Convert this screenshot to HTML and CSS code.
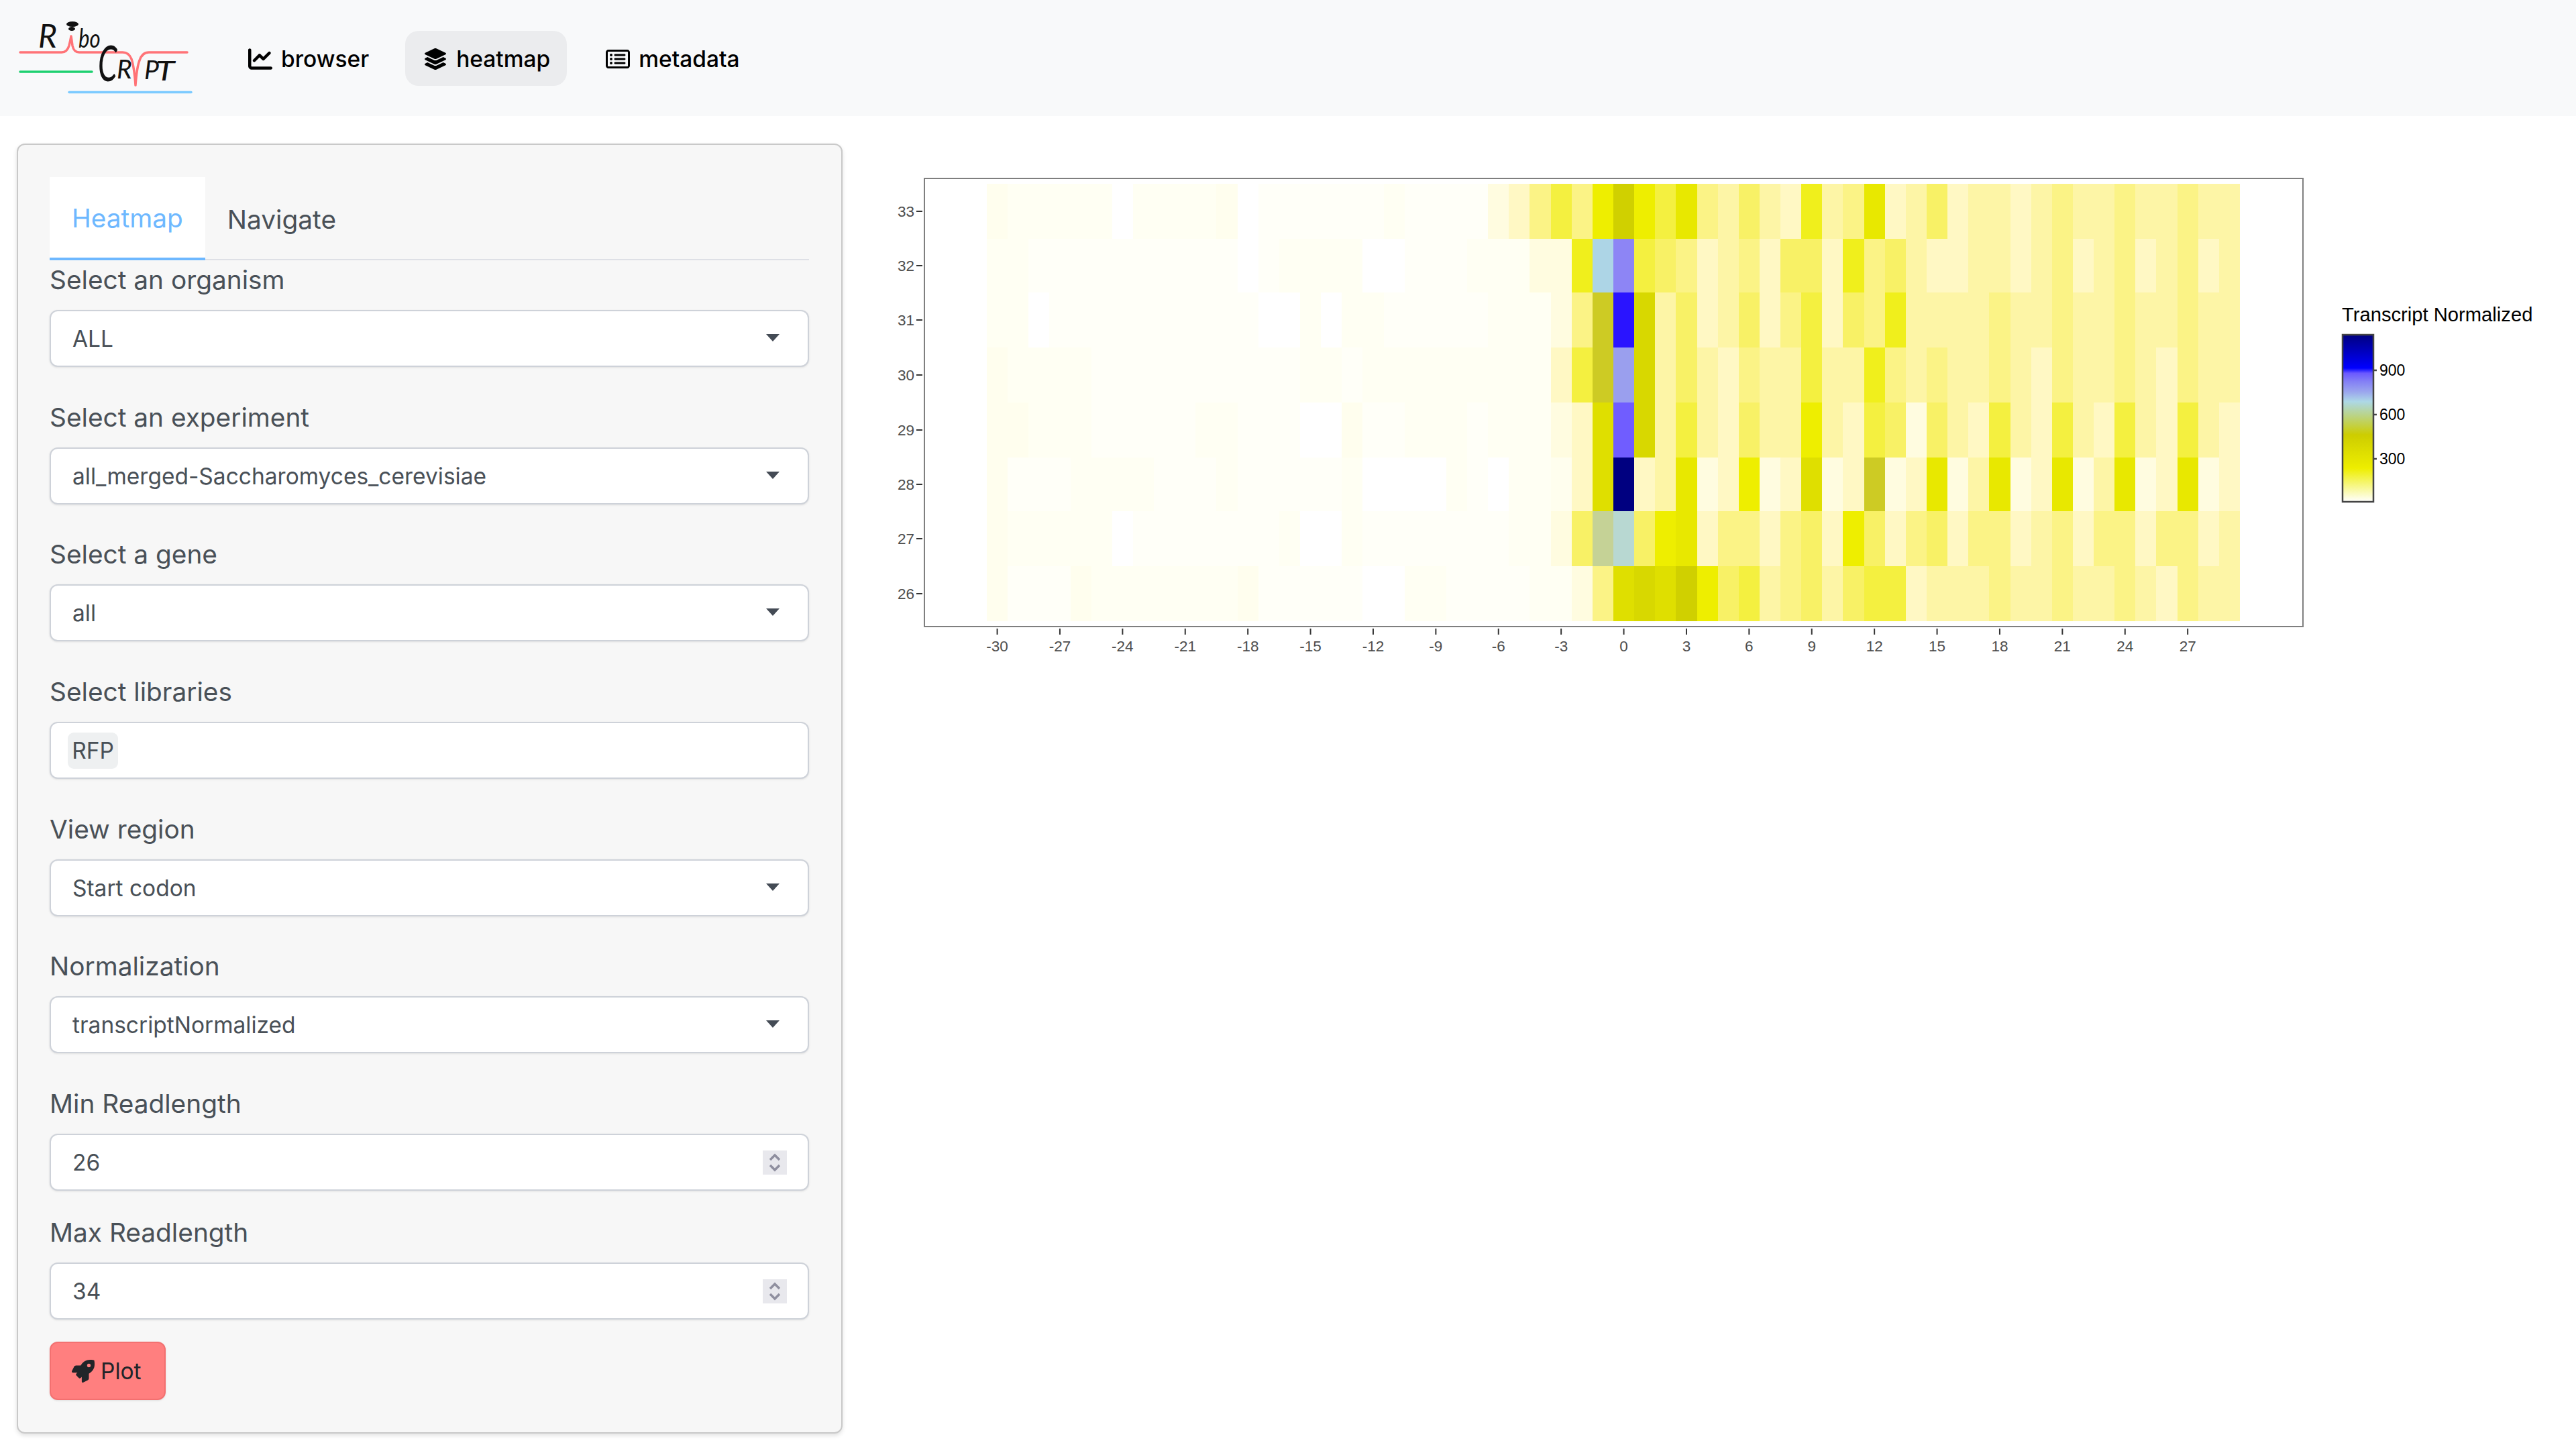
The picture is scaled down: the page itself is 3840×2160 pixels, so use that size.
FILE: index.html
```html
<!DOCTYPE html>
<html lang="en">
<head>
<meta charset="utf-8">
<title>RiboCrypt heatmap</title>
<link rel="stylesheet" href="styles.css">
</head>
<body>
<header class="navbar">
  <svg class="logo" viewBox="0 0 290 145" width="290" height="145">
    <path class="logo-red" d="M30 78H92Q100 78 103 68Q105 60 106 54Q107 60 108 68Q110 78 118 78H183Q192 78 196 88Q200 100 202 127Q204 100 208 90Q212 78 222 78H279"/>
    <path class="logo-green" d="M30 107H137"/>
    <path class="logo-blue" d="M103 137.500H285"/>
    <ellipse class="logo-ink" cx="108" cy="36" rx="9" ry="4"/>
    <ellipse class="logo-ink" cx="107" cy="43" rx="5" ry="3"/>
    <text class="logo-text" x="57" y="71">R</text>
    <text class="logo-text logo-small" transform="translate(117 71) scale(.8 1)">bo</text>
    <text class="logo-text logo-big" transform="translate(146 121) scale(.62 1)">C</text>
    <text class="logo-text logo-small" x="174" y="117">R</text>
    <text class="logo-text logo-small" x="215" y="118">P</text>
    <text class="logo-text logo-t" transform="translate(232 120) scale(1.15 .9)">T</text>
  </svg>
  <nav class="nav">
    <a class="nav-link"><svg class="nav-icon" viewBox="0 0 512 512"><path d="M64 64c0-17.700-14.300-32-32-32S0 46.300 0 64V400c0 44.200 35.800 80 80 80H480c17.700 0 32-14.300 32-32s-14.300-32-32-32H80c-8.800 0-16-7.200-16-16V64zm406.600 86.600c12.500-12.500 12.500-32.800 0-45.300s-32.800-12.500-45.300 0L320 210.700l-57.400-57.400c-12.500-12.500-32.800-12.500-45.300 0l-112 112c-12.500 12.500-12.500 32.800 0 45.300s32.800 12.500 45.300 0L240 221.300l57.400 57.400c12.500 12.500 32.800 12.500 45.300 0l128-128z"/></svg>browser</a>
    <a class="nav-link active"><svg class="nav-icon" viewBox="0 0 576 512"><path d="M264.500 5.200c14.900-6.900 32.100-6.900 47 0l218.600 101c8.500 3.900 13.900 12.400 13.900 21.800s-5.400 17.900-13.900 21.800l-218.600 101c-14.900 6.900-32.100 6.900-47 0L45.900 149.800C37.400 145.800 32 137.300 32 128s5.400-17.900 13.900-21.800L264.500 5.200zM476.900 209.600l53.200 24.600c8.500 3.900 13.900 12.400 13.900 21.800s-5.400 17.900-13.900 21.800l-218.600 101c-14.900 6.900-32.100 6.900-47 0L45.900 277.800C37.400 273.800 32 265.300 32 256s5.400-17.900 13.900-21.800l53.200-24.600 152 70.200c23.400 10.800 50.400 10.800 73.800 0l152-70.200zm-152 198.200l152-70.200 53.200 24.600c8.500 3.900 13.900 12.400 13.900 21.800s-5.400 17.900-13.900 21.800l-218.600 101c-14.900 6.900-32.100 6.900-47 0L45.900 405.800C37.400 401.800 32 393.300 32 384s5.400-17.900 13.900-21.800l53.200-24.600 152 70.200c23.400 10.800 50.400 10.800 73.800 0z"/></svg>heatmap</a>
    <a class="nav-link"><svg class="nav-icon" viewBox="0 0 576 512"><path d="M64 80c-8.800 0-16 7.200-16 16V416c0 8.800 7.200 16 16 16H512c8.800 0 16-7.200 16-16V96c0-8.800-7.200-16-16-16H64zM0 96C0 60.700 28.700 32 64 32H512c35.300 0 64 28.700 64 64V416c0 35.300-28.700 64-64 64H64c-35.300 0-64-28.700-64-64V96zm96 64a32 32 0 1 1 64 0 32 32 0 1 1 -64 0zm104 0c0-13.300 10.700-24 24-24H448c13.300 0 24 10.700 24 24s-10.700 24-24 24H224c-13.300 0-24-10.700-24-24zm0 96c0-13.300 10.700-24 24-24H448c13.300 0 24 10.700 24 24s-10.700 24-24 24H224c-13.300 0-24-10.700-24-24zm0 96c0-13.300 10.700-24 24-24H448c13.300 0 24 10.700 24 24s-10.700 24-24 24H224c-13.300 0-24-10.700-24-24zm-72-64a32 32 0 1 1 0-64 32 32 0 1 1 0 64zM96 352a32 32 0 1 1 64 0 32 32 0 1 1 -64 0z"/></svg>metadata</a>
  </nav>
</header>
<main class="page">
  <aside class="card">
    <div class="tabs">
      <a class="tab active">Heatmap</a>
      <a class="tab">Navigate</a>
    </div>
    <div class="group"><div class="label">Select an organism</div><div class="control"><span>ALL</span><i class="caret"></i></div></div>
    <div class="group"><div class="label">Select an experiment</div><div class="control"><span>all_merged-Saccharomyces_cerevisiae</span><i class="caret"></i></div></div>
    <div class="group"><div class="label">Select a gene</div><div class="control"><span>all</span><i class="caret"></i></div></div>
    <div class="group"><div class="label">Select libraries</div><div class="control tags"><span class="tag">RFP</span></div></div>
    <div class="group"><div class="label">View region</div><div class="control"><span>Start codon</span><i class="caret"></i></div></div>
    <div class="group"><div class="label">Normalization</div><div class="control"><span>transcriptNormalized</span><i class="caret"></i></div></div>
    <div class="group tight"><div class="label">Min Readlength</div><div class="control"><span>26</span><span class="spin"><svg viewBox="0 0 36 36" width="36" height="36"><path d="M11 14l7-7 7 7M11 22l7 7 7-7"/></svg></span></div></div>
    <div class="group tight"><div class="label">Max Readlength</div><div class="control"><span>34</span><span class="spin"><svg viewBox="0 0 36 36" width="36" height="36"><path d="M11 14l7-7 7 7M11 22l7 7 7-7"/></svg></span></div></div>
    <button class="plot-btn"><svg class="btn-icon" viewBox="0 0 512 512"><path d="M505.120 19.090c-1.190-5.550-6.660-11.030-12.200-12.210C460.720 0 435.510 0 410.420 0 307.170 0 245.260 55.200 199.030 128H94.830c-16.350.02-35.550 11.870-42.880 26.490L2.520 253.320A28.400 28.400 0 0 0 0 264a24 24 0 0 0 24 24h103.780l-22.470 22.470a32 32 0 0 0 0 45.250l50.900 50.910a32 32 0 0 0 45.260 0L224 384.190V488a24 24 0 0 0 24 24 28.550 28.550 0 0 0 10.700-2.510l98.750-49.390c14.620-7.330 26.500-26.500 26.500-42.890V312.790c72.590-46.300 128-108.400 128-211.090.1-25.200.1-50.400-6.830-82.610zM384 168a40 40 0 1 1 40-40 40 40 0 0 1-40 40z"/></svg>Plot</button>
  </aside>
  <section class="plot">
    <svg id="heatmap" class="plot-svg" viewBox="-60 0 2463 720" width="2463" height="720">
      <defs>
        <linearGradient id="ramp" x1="0" y1="1" x2="0" y2="0">
          <stop offset="0" stop-color="#ffffff"/>
          <stop offset="0.2" stop-color="#eeee00"/>
          <stop offset="0.4" stop-color="#cdcd00"/>
          <stop offset="0.6" stop-color="#add8e6"/>
          <stop offset="0.66" stop-color="#9aa5ee"/>
          <stop offset="0.72" stop-color="#8480f5"/>
          <stop offset="0.77" stop-color="#6a58ff"/>
          <stop offset="0.8" stop-color="#0000ff"/>
          <stop offset="1" stop-color="#000080"/>
        </linearGradient>
      </defs>
      <g id="cells"></g>
      <rect class="frame" x="1" y="1" width="2055" height="668"/>
      <g id="axes"></g>
      <text class="legend-title" x="2114" y="214">Transcript Normalized</text>
      <rect class="legend-bar" x="2115" y="234" width="46" height="249" fill="url(#ramp)"/>
      <path class="legend-tick" d="M2162 287h4M2162 353h4M2162 419h4"/>
      <text class="legend-label" x="2170" y="295">900</text>
      <text class="legend-label" x="2170" y="361">600</text>
      <text class="legend-label" x="2170" y="427">300</text>
    </svg>
  </section>
</main>
<script src="heatmap.js"></script>
</body>
</html>
```
FILE: styles.css
```css
* { box-sizing: border-box; }
html, body { margin: 0; padding: 0; background: #fff; }
body { font-family: Inter, "Liberation Sans", sans-serif; font-size: 37px; color: #495057; width: 3840px; height: 2160px; overflow: hidden; }

.navbar { height: 173px; background: #f8f9fa; display: flex; align-items: flex-start; }
.logo { display: block; flex: none; }
.logo-red, .logo-green, .logo-blue { fill: none; stroke-width: 3.500; stroke-linecap: round; stroke-linejoin: round; }
.logo-red { stroke: #ff7377; }
.logo-green { stroke: #1ed070; }
.logo-blue { stroke: #7ccbff; }
.logo-ink { fill: #111; }
.logo-text { font-family: "Lato", sans-serif; font-style: italic; font-weight: 400; font-size: 48px; fill: #111; }
.logo-small { font-size: 39px; }
.logo-t { font-size: 45px; }
.logo-big { font-size: 74px; }

.nav { display: flex; margin: 46px 0 0 80px; }
.nav-link { height: 82px; padding-top: 1px; display: flex; align-items: center; gap: 13px; color: #000; font-size: 33.500px; font-weight: 500; margin-right: 58px; }
.nav-link:first-child { margin-right: 54px; }
.nav-link.active { background: #ebecee; border-radius: 20px; padding: 1px 25px 0 27px; }
.nav-icon { width: 36px; height: 36px; fill: #000; flex: none; }

.page { display: flex; align-items: flex-start; }
.card { margin: 41px 0 0 25px; width: 1231px; height: 1923px; padding: 48px 48px 0 47px; background: #f7f7f7; border: 2.500px solid #c9c9c9; border-radius: 12px; box-shadow: 0 3px 6px rgba(0,0,0,.12); flex: none; }
.tabs { display: flex; height: 124px; border-bottom: 2.500px solid #dee0e6; }
.tab { padding: 0 33px; height: 124px; display: flex; align-items: center; font-size: 38.800px; color: #495057; }
.tab.active { background: #fff; color: #6eb8ff; border-bottom: 4px solid #6eb8ff; }

.group { margin-bottom: 45.700px; }
.group.tight { margin-bottom: 33px; }
.label { height: 74px; line-height: 58px; font-size: 38.800px; color: #495057; }
.control { height: 85px; background: #fff; border: 2.500px solid #ced2d9; border-radius: 12px; box-shadow: 0 1px 3px rgba(0,0,0,.1); padding: 1px 31px 0 32px; display: flex; align-items: center; justify-content: space-between; font-size: 33.500px; color: #495057; }
.caret { width: 0; height: 0; border-left: 10px solid transparent; border-right: 10px solid transparent; border-top: 11px solid #444b55; margin-right: 11px; margin-top: -3px; }
.control.tags { padding-left: 25px; }
.tag { background: #eef0f1; border-radius: 9px; height: 54px; width: 75px; display: flex; align-items: center; justify-content: center; }
.spin { width: 36px; height: 36px; background: #e8e8ed; display: block; margin-top: -1px; }
.spin svg { display: block; fill: none; stroke: #8f8f9f; stroke-width: 3.500; }

.plot-btn { display: flex; align-items: center; gap: 9px; width: 173px; height: 87px; padding: 0 0 0 31px; background: #ff7f7f; border: 2.500px solid #f37070; border-radius: 12px; font-family: inherit; font-size: 33.500px; color: #212529; box-shadow: 0 1px 3px rgba(0,0,0,.1); }
.btn-icon { width: 34px; height: 34px; fill: #212529; flex: none; }

.plot { margin: 92px 0 0 61px; flex: none; }
.plot-svg { display: block; }
.frame { fill: none; stroke: #7f7f7f; stroke-width: 2; }
.axis-tick { stroke: #333; stroke-width: 2; fill: none; }
.axis-label { font-family: "Liberation Sans", sans-serif; font-size: 22.500px; fill: #4d4d4d; }
.legend-title { font-family: "Liberation Sans", sans-serif; font-size: 29.200px; fill: #000; }
.legend-label { font-family: "Liberation Sans", sans-serif; font-size: 23px; fill: #000; }
.legend-bar { stroke: #444; stroke-width: 2.500; }
.legend-tick { stroke: #444; stroke-width: 2.500; fill: none; }

.c0 { fill: #ffffff; } .cx { fill: #fffff8; } .c1 { fill: #fffff3; } .cy { fill: #fffeee; }
.c2 { fill: #fffce0; } .c3 { fill: #fff8c4; } .c4 { fill: #fdf5a6; } .c5 { fill: #fbf386; }
.c6 { fill: #f8f166; } .c7 { fill: #f4f040; } .c8 { fill: #f0ef1c; } .c9 { fill: #eeee00; }
.ca { fill: #e8e800; } .cb { fill: #dfdf00; } .cc { fill: #d8d800; } .cd { fill: #d0d000; }
.ce { fill: #cdcb24; } .cf { fill: #c5d296; } .cg { fill: #b8d8d2; } .ch { fill: #add5e6; }
.ci { fill: #8d85f5; } .cj { fill: #9a9fee; } .ck { fill: #705dff; } .cl { fill: #2a14ff; }
.cm { fill: #000080; }
```
FILE: heatmap.js
```js
// Heat level per read length (33 down to 26): positions -30..-7, -6..0, 1..9, 10..19, 20..29.
var rows = [
  "y1111101111y0xxxxxx1xxxx" + "235759d" + "97a546438" + "45a3463443" + "4544544544",
  "11xxxxxxxxxx0x111100xxx1" + "11228hi" + "765345366" + "3856433443" + "4534534534",
  "110xxxxxxxxxx0010" + "11xxxxx" + "11125el" + "c46346357" + "3658444454" + "4544544544",
  "y1111xxxxxxxxxx11x111111" + "11137ej" + "c46435447" + "4485454454" + "3544543544",
  "yy111xxxxx11xxx00yxx111x" + "11123bk" + "c47436449" + "4376264374" + "3743743743",
  "yxxx1111xxx1xxxxx10000" + "1x" + "011y3bm" + "34a23923b" + "23e23a24a2" + "3a24a23a23",
  "y111110xxxxxxx1001xxxxxx" + "x1126fg" + "69a355356" + "3963563553" + "4535535534",
  "yxxxy1111111yxxxxx0011xx" + "xx1125b" + "cbd967456" + "4677344454" + "4544543544"
];
var rowEdges = [9, 91, 171, 253, 335, 417, 497, 579, 661];
var left = 94, colW = 31.133, svgNS = "http://www.w3.org/2000/svg";
var cells = document.getElementById("cells"), axes = document.getElementById("axes");

function el(parent, tag, attrs, text) {
  var n = document.createElementNS(svgNS, tag);
  for (var k in attrs) n.setAttribute(k, attrs[k]);
  if (text !== undefined) n.textContent = text;
  parent.appendChild(n);
  return n;
}

rows.forEach(function (row, r) {
  for (var c = 0; c < 60; c++) {
    var x0 = Math.round(left + c * colW), x1 = Math.round(left + (c + 1) * colW);
    el(cells, "rect", {
      "class": "c" + row.charAt(c), x: x0, y: rowEdges[r],
      width: x1 - x0, height: rowEdges[r + 1] - rowEdges[r],
      "shape-rendering": "crispEdges"
    });
  }
});

for (var pos = -30; pos <= 27; pos += 3) {
  var x = left + (pos + 30.5) * colW;
  el(axes, "path", { "class": "axis-tick", d: "M" + x + " 672v9" });
  el(axes, "text", { "class": "axis-label", x: x, y: 706, "text-anchor": "middle" }, String(pos));
}
for (var i = 0; i < 8; i++) {
  var y = (rowEdges[i] + rowEdges[i + 1]) / 2;
  el(axes, "path", { "class": "axis-tick", d: "M-11 " + y + "h9" });
  el(axes, "text", { "class": "axis-label", x: -14, y: y + 8, "text-anchor": "end" }, String(33 - i));
}
```
